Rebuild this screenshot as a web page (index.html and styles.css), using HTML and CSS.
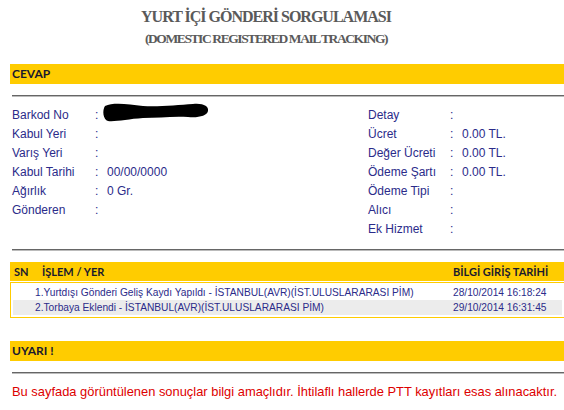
FILE: index.html
```html
<!DOCTYPE html>
<html lang="tr">
<head>
  <meta charset="UTF-8">
  <title>Yurt İçi Gönderi Sorgulaması</title>
  <link rel="stylesheet" href="styles.css">
</head>
<body>
<div class="page">
  <div class="title">
    <h1>YURT İÇİ GÖNDERİ SORGULAMASI</h1>
    <h2>(DOMESTIC REGISTERED MAIL TRACKING)</h2>
  </div>

  <div class="bar bar-first">CEVAP</div>
  <div class="rule"></div>

  <div class="info">
    <div class="col col-left">
      <div class="row">
        <span class="lbl">Barkod No</span><span class="sep">:</span>
        <span class="val">
          <svg class="scribble" width="106" height="20" viewBox="0 0 106 20">
            <path d="M2,3 C10,-1 25,1 40,3 C55,4 75,2 90,1 C100,0 106,3 105,8 C104,13 95,15 85,14 C70,13 55,15 40,15 C25,16 12,19 5,18 C0,17 -1,7 2,3 Z" fill="#000"/>
          </svg>
        </span>
      </div>
      <div class="row"><span class="lbl">Kabul Yeri</span><span class="sep">:</span><span class="val"></span></div>
      <div class="row"><span class="lbl">Varış Yeri</span><span class="sep">:</span><span class="val"></span></div>
      <div class="row"><span class="lbl">Kabul Tarihi</span><span class="sep">:</span><span class="val">00/00/0000</span></div>
      <div class="row"><span class="lbl">Ağırlık</span><span class="sep">:</span><span class="val">0 Gr.</span></div>
      <div class="row"><span class="lbl">Gönderen</span><span class="sep">:</span><span class="val"></span></div>
    </div>
    <div class="col col-right">
      <div class="row"><span class="lbl">Detay</span><span class="sep">:</span><span class="val"></span></div>
      <div class="row"><span class="lbl">Ücret</span><span class="sep">:</span><span class="val">0.00 TL.</span></div>
      <div class="row"><span class="lbl">Değer Ücreti</span><span class="sep">:</span><span class="val">0.00 TL.</span></div>
      <div class="row"><span class="lbl">Ödeme Şartı</span><span class="sep">:</span><span class="val">0.00 TL.</span></div>
      <div class="row"><span class="lbl">Ödeme Tipi</span><span class="sep">:</span><span class="val"></span></div>
      <div class="row"><span class="lbl">Alıcı</span><span class="sep">:</span><span class="val"></span></div>
      <div class="row"><span class="lbl">Ek Hizmet</span><span class="sep">:</span><span class="val"></span></div>
    </div>
  </div>

  <div class="rule rule-info"></div>

  <div class="moves">
    <div class="moves-head">
      <span class="sn">SN</span>
      <span class="op">İŞLEM / YER</span>
      <span class="dt">BİLGİ GİRİŞ TARİHİ</span>
    </div>
    <div class="moves-body">
      <div class="move">
        <span class="op">1.Yurtdışı Gönderi Geliş Kaydı Yapıldı - İSTANBUL(AVR)(İST.ULUSLARARASI PİM)</span>
        <span class="dt">28/10/2014 16:18:24</span>
      </div>
      <div class="move alt">
        <span class="op">2.Torbaya Eklendi - İSTANBUL(AVR)(İST.ULUSLARARASI PİM)</span>
        <span class="dt">29/10/2014 16:31:45</span>
      </div>
    </div>
  </div>

  <div class="bar bar-warn">UYARI !</div>
  <div class="rule"></div>
  <p class="note">Bu sayfada görüntülenen sonuçlar bilgi amaçlıdır. İhtilaflı hallerde PTT kayıtları esas alınacaktır.</p>
</div>
</body>
</html>
```

FILE: styles.css
```css
* {
  margin: 0;
  padding: 0;
}

body {
  background-color: #fff;
  font-family: "Liberation Sans", Arial, sans-serif;
  overflow: hidden;
}

.page {
  padding: 8px 0 0 10px;
}

/* baslik */
.title {
  width: 512px;
  text-align: center;
  font-family: "Liberation Serif", "Times New Roman", serif;
  color: #5a5a5a;
}

.title h1 {
  font-size: 16px;
  line-height: 18px;
  letter-spacing: -1px;
}

.title h2 {
  margin-top: 5px;
  font-size: 13.5px;
  line-height: 16px;
  letter-spacing: -1.4px;
}

.bar {
  height: 20px;
  line-height: 20px;
  padding-left: 2px;
  background-color: #ffcc00;
  color: #1a1a2e;
  font-family: Lato, "Liberation Sans", sans-serif;
  font-weight: bold;
  font-size: 12px;
}

.bar-first {
  margin-top: 17px;
}

.bar-warn {
  margin-top: 23px;
}

.rule {
  margin: 11px 0 0 2px;
  height: 1px;
  background-color: #666;
  border-bottom: 1px solid #bbb;
}

/* gonderi bilgileri */
.info {
  display: flex;
  margin-top: 9px;
  padding-left: 2px;
  font-size: 12px;
  color: #2b2b8a;
}

.col-left {
  width: 356px;
}

.row {
  display: grid;
  height: 19px;
  line-height: 19px;
}

.col-left .row {
  grid-template-columns: 83px 12px auto;
}

.col-right .row {
  grid-template-columns: 82px 12px auto;
}

.scribble {
  display: block;
  margin: -3px 0 0 -4px;
  overflow: visible;
}

.rule-info {
  margin-top: 10px;
}

/* hareketler */
.moves {
  margin-top: 11px;
}

.moves-head {
  display: grid;
  grid-template-columns: 32px 411px 1fr;
  height: 19px;
  line-height: 19px;
  background-color: #ffcc00;
  color: #1a1a2e;
  font-family: Lato, "Liberation Sans", sans-serif;
  font-weight: bold;
  font-size: 11px;
}

.moves-head .sn {
  padding-left: 4px;
}

.moves-body {
  margin-top: 1px;
  padding: 2px;
  border: 1px solid #ffcc00;
  border-right: none;
  font-size: 10.2px;
  color: #2b2b8a;
}

.move {
  display: grid;
  grid-template-columns: 440px 1fr;
  height: 15px;
  line-height: 15px;
  white-space: nowrap;
}

.move.alt {
  background-color: #ececec;
}

.move .op {
  padding-left: 22px;
}

.note {
  margin: 10px 0 0 2px;
  font-size: 12.9px;
  line-height: 16px;
  color: #dd0000;
  white-space: nowrap;
}
```
